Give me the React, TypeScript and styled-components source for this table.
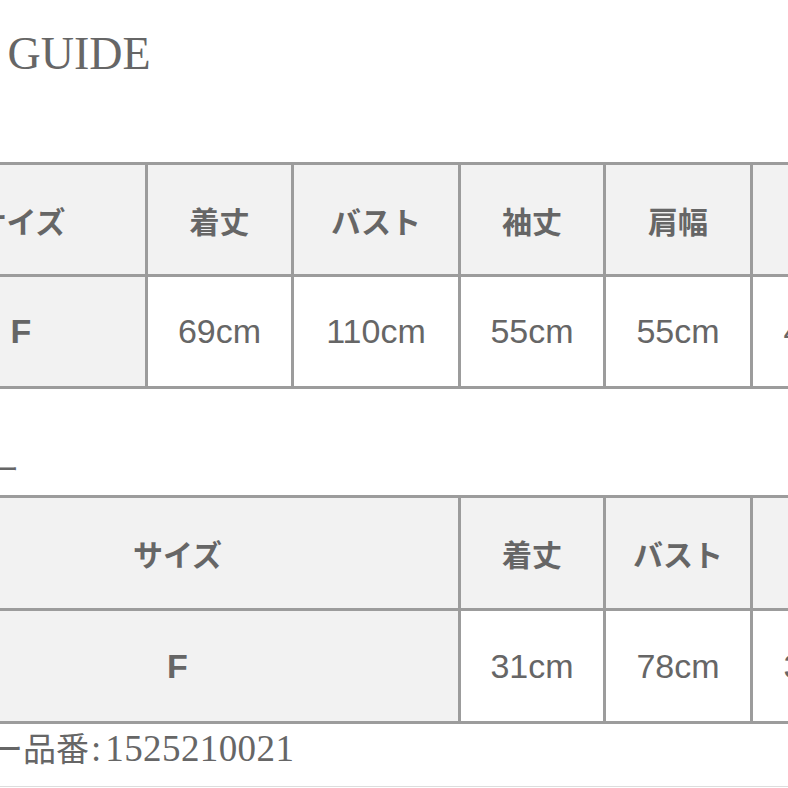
import React from 'react'
import styled, { createGlobalStyle } from 'styled-components'

const GlobalStyle = createGlobalStyle`
  html, body {
    margin: 0;
    padding: 0;
    background: #ffffff;
    overflow: hidden;
  }
  body {
    color: #666666;
    font-family: "Liberation Sans", "Noto Sans CJK JP", sans-serif;
  }
`

interface Col {
  label: string;
  value: string;
  span?: number;
}

const TOPS_COLS: Col[] = [
  { label: 'サイズ', value: 'F' },
  { label: '着丈', value: '69cm' },
  { label: 'バスト', value: '110cm' },
  { label: '袖丈', value: '55cm' },
  { label: '肩幅', value: '55cm' },
  { label: '身幅', value: '45cm' },
]

const INNER_COLS: Col[] = [
  { label: 'サイズ', value: 'F', span: 3 },
  { label: '着丈', value: '31cm' },
  { label: 'バスト', value: '78cm' },
  { label: '身幅', value: '39cm' },
]

// widths of the six base columns, shared by both tables
const WIDTHS = [251, 146, 167, 145, 147, 147]

function SizeTable({ cols, rowH }: { cols: Col[]; rowH: number }) {
  return (
    <Table>
      <colgroup>
        {WIDTHS.map((w, i) => (
          <col key={i} style={{ width: w }} />
        ))}
      </colgroup>
      <tbody>
        <tr>
          {cols.map((c, i) => (
            <HeadCell key={i} colSpan={c.span} $h={rowH}>{c.label}</HeadCell>
          ))}
        </tr>
        <tr>
          {cols.map((c, i) =>
            i === 0 ? (
              <SizeCell key={i} colSpan={c.span} $h={rowH}>{c.value}</SizeCell>
            ) : (
              <ValueCell key={i} $h={rowH}>{c.value}</ValueCell>
            )
          )}
        </tr>
      </tbody>
    </Table>
  )
}

export default function App() {
  return (
    <>
      <GlobalStyle />
      <Page>
        <Title>SIZE GUIDE</Title>
        <SizeTable cols={TOPS_COLS} rowH={109} />
        <Label>インナー</Label>
        <SizeTable cols={INNER_COLS} rowH={110} />
        <ItemNo>
          <Prefix>インナー品番</Prefix>
          <Colon>:</Colon>
          <Code>1525210021</Code>
        </ItemNo>
        <Divider />
      </Page>
    </>
  )
}

const Page = styled.div`
  margin-left: -106px;
  width: 1100px;
`

const Title = styled.h1`
  margin: 0;
  padding: 26px 0 0 5px;
  height: 56px;
  font-family: "Liberation Serif", serif;
  font-size: 46px;
  font-weight: 400;
  line-height: 56px;
  color: #666666;
`

const Table = styled.table`
  margin-top: 80px;
  border-collapse: collapse;
  table-layout: fixed;
  width: 1003px;
`

const Cell = styled.td<{ $h: number }>`
  height: ${p => p.$h}px;
  padding: 0;
  border: 3px solid #9c9c9c;
  text-align: center;
  vertical-align: middle;
  color: #666666;
`

const HeadCell = styled(Cell)`
  background: #f2f2f2;
  font-family: "Noto Sans CJK JP", sans-serif;
  font-size: 30px;
  font-weight: 700;
`

const SizeCell = styled(Cell)`
  background: #f2f2f2;
  font-family: "Liberation Sans", sans-serif;
  font-size: 34px;
  font-weight: 700;
`

const ValueCell = styled(Cell)`
  background: #ffffff;
  font-family: "Liberation Sans", sans-serif;
  font-size: 34px;
  font-weight: 400;
`

const Label = styled.div`
  margin-top: 58px;
  padding-left: 5px;
  height: 40px;
  font-family: "Noto Sans CJK JP", serif;
  font-size: 30px;
  line-height: 40px;

  & + table {
    margin-top: 8px;
  }
`

const ItemNo = styled.div`
  display: flex;
  align-items: baseline;
  margin-top: 6px;
  margin-left: -3px;
  white-space: nowrap;
  color: #666666;
`

const Prefix = styled.span`
  font-family: "Noto Sans CJK JP", serif;
  font-size: 33px;
  line-height: 1;
`

const Colon = styled.span`
  padding: 0 4px 0 2px;
  font-family: "Liberation Serif", serif;
  font-size: 37px;
  line-height: 1;
`

const Code = styled.span`
  font-family: "Liberation Serif", serif;
  font-size: 37px;
  letter-spacing: 0.4px;
  line-height: 1;
`

const Divider = styled.div`
  margin-top: 19px;
  border-top: 1px solid #dddddd;
`
